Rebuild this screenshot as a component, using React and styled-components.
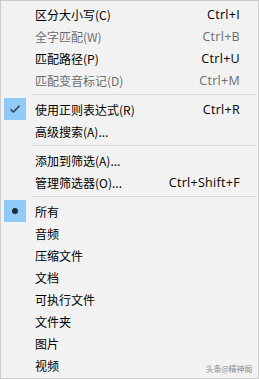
import React from "react";
import styled, { createGlobalStyle } from "styled-components";

const GlobalStyle = createGlobalStyle`
  html, body {
    margin: 0;
    padding: 0;
    background: #f2f2f2;
  }
  body {
    font-family: "Noto Sans CJK SC", "Noto Sans", sans-serif;
  }
`;

const Menu = styled.div`
  position: relative;
  box-sizing: border-box;
  width: 259px;
  height: 379px;
  padding: 2px;
  background: #f2f2f2;
  border: 1px solid #cccccc;
  display: flex;
  flex-direction: column;
`;

const Item = styled.div`
  display: grid;
  grid-template-columns: 30px 1fr auto;
  align-items: center;
  height: 22px;
  padding-right: 16px;
  font-size: 12px;
  color: ${(p) => (p.disabled ? "#6d6d6d" : "#000000")};
`;

const Mark = styled.div`
  width: 22px;
  height: 22px;
  margin-left: 1px;
  display: flex;
  align-items: center;
  justify-content: center;
  background: ${(p) => (p.on ? "#91c9f7" : "transparent")};
`;

const Label = styled.span`
  padding-left: 2px;
  white-space: nowrap;
`;

const Shortcut = styled.span`
  font-family: "Open Sans", "Noto Sans", sans-serif;
  font-size: 12.5px;
  letter-spacing: 0.3px;
  white-space: nowrap;
`;

const Separator = styled.div`
  height: 7px;
  display: flex;
  align-items: center;
  padding-left: 29px;
  &::after {
    content: "";
    flex: 1;
    height: 1px;
    background: #d7d7d7;
  }
`;

const Dot = styled.span`
  width: 6px;
  height: 6px;
  border-radius: 50%;
  background: #1f2b38;
`;

const Watermark = styled.span`
  position: absolute;
  right: 6px;
  bottom: 4px;
  font-size: 8px;
  color: #8c8c8c;
  letter-spacing: -0.2px;
`;

const Check = () => (
  <svg width="12" height="10" viewBox="0 0 12 10">
    <path d="M1.5 5.2 L4.4 8 L10.5 1.8" fill="none" stroke="#26384d" strokeWidth="1.4" />
  </svg>
);

const groups = [
  [
    { label: "区分大小写(C)", key: "Ctrl+I" },
    { label: "全字匹配(W)", key: "Ctrl+B", disabled: true },
    { label: "匹配路径(P)", key: "Ctrl+U" },
    { label: "匹配变音标记(D)", key: "Ctrl+M", disabled: true },
  ],
  [
    { label: "使用正则表达式(R)", key: "Ctrl+R", mark: "check" },
    { label: "高级搜索(A)..." },
  ],
  [
    { label: "添加到筛选(A)..." },
    { label: "管理筛选器(O)...", key: "Ctrl+Shift+F" },
  ],
  [
    { label: "所有", mark: "dot" },
    { label: "音频" },
    { label: "压缩文件" },
    { label: "文档" },
    { label: "可执行文件" },
    { label: "文件夹" },
    { label: "图片" },
    { label: "视频" },
  ],
];

export default function App() {
  return (
    <>
      <GlobalStyle />
      <Menu>
        {groups.map((group, gi) => (
          <React.Fragment key={gi}>
            {gi > 0 && <Separator />}
            {group.map((item) => (
              <Item key={item.label} disabled={item.disabled}>
                <Mark on={!!item.mark}>
                  {item.mark === "check" && <Check />}
                  {item.mark === "dot" && <Dot />}
                </Mark>
                <Label>{item.label}</Label>
                <Shortcut>{item.key}</Shortcut>
              </Item>
            ))}
          </React.Fragment>
        ))}
        <Watermark>头条@精神阁</Watermark>
      </Menu>
    </>
  );
}
